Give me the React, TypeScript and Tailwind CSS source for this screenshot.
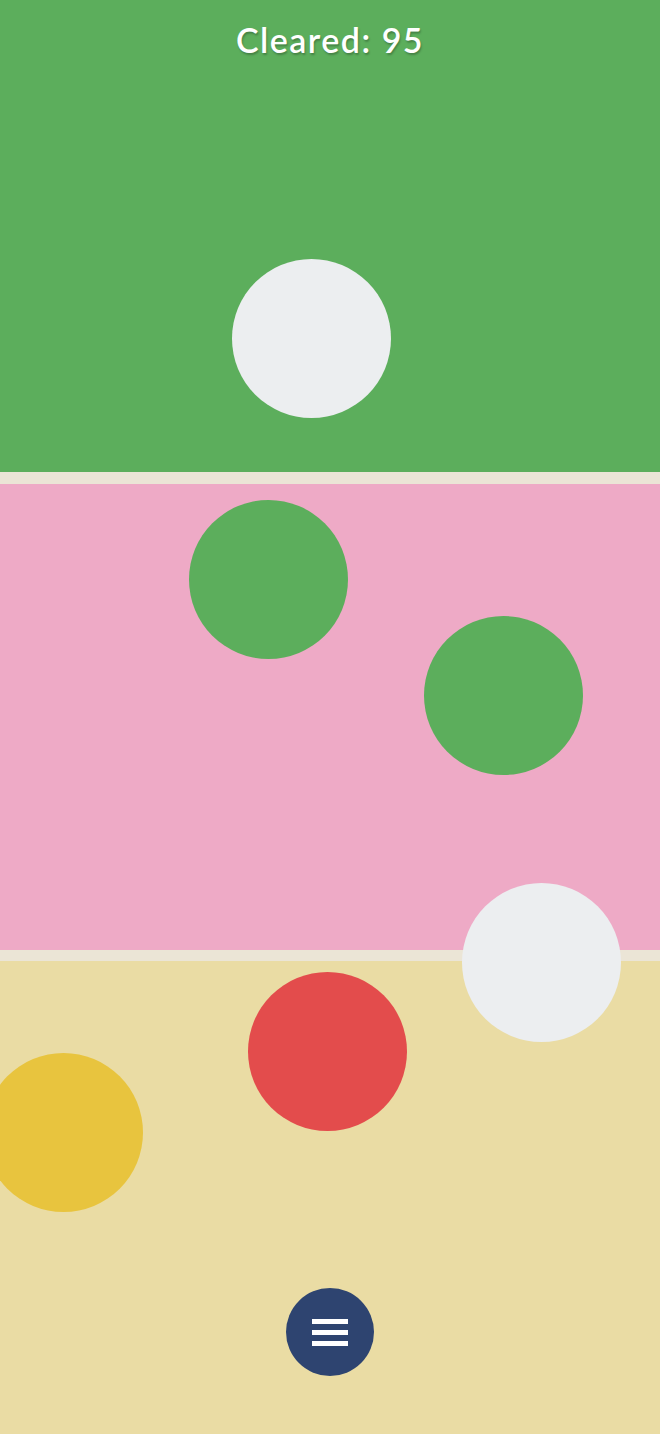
const pieces = [
  { x: 232, y: 259, color: "bg-[#eceef0]" },
  { x: 189, y: 500, color: "bg-[#5cae5c]" },
  { x: 424, y: 616, color: "bg-[#5cae5c]" },
  { x: 462, y: 883, color: "bg-[#eceef0]" },
  { x: 248, y: 972, color: "bg-[#e34c4c]" },
  { x: -16, y: 1053, color: "bg-[#e8c43e]" },
];

export default function App() {
  return (
    <div className="relative w-[660px] h-[1434px] overflow-hidden flex flex-col font-['Lato','Open_Sans',sans-serif]">
      <div className="h-[472px] bg-[#5cae5c] flex justify-center">
        <h1 className="mt-[18px] text-[34px] leading-[44px] font-semibold tracking-[1.5px] text-white [text-shadow:1px_2px_2px_rgba(0,0,0,0.25)]">
          Cleared: 95
        </h1>
      </div>
      <div className="h-[12px] bg-[#ebe5d6]" />
      <div className="h-[466px] bg-[#eeaac6]" />
      <div className="h-[11px] bg-[#ebe5d6]" />
      <div className="flex-1 bg-[#eadca4] flex flex-col justify-end items-center pb-[58px]">
        <button className="w-[88px] h-[88px] rounded-full bg-[#2e4470] flex flex-col items-center justify-center gap-[6px]">
          <span className="block w-[36px] h-[5px] bg-white" />
          <span className="block w-[36px] h-[5px] bg-white" />
          <span className="block w-[36px] h-[5px] bg-white" />
        </button>
      </div>

      {pieces.map((p, i) => (
        <div
          key={i}
          className={`absolute w-[159px] h-[159px] rounded-full ${p.color}`}
          style={{ left: p.x, top: p.y }}
        />
      ))}
    </div>
  );
}
